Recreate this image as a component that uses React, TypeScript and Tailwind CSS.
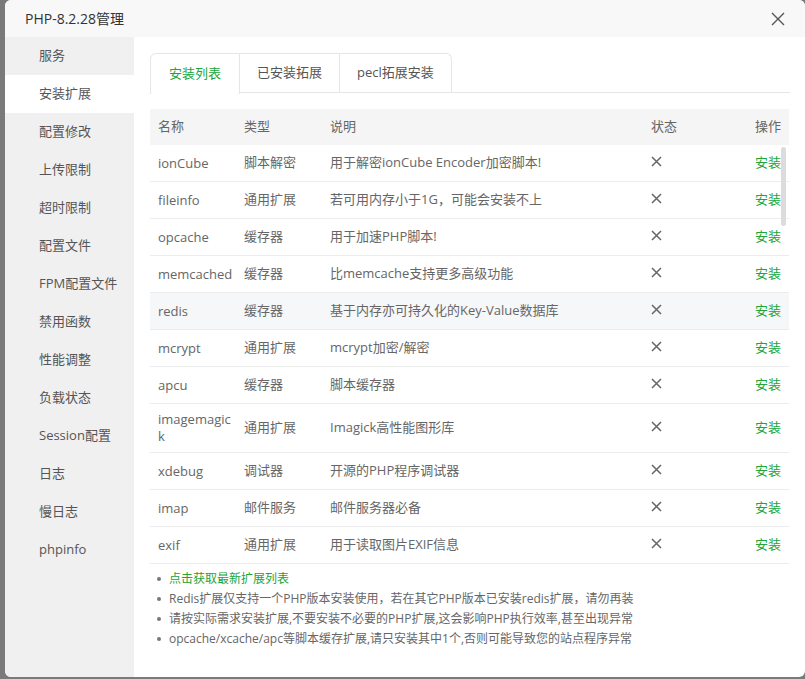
import React from 'react';

const menu = [
  '服务',
  '安装扩展',
  '配置修改',
  '上传限制',
  '超时限制',
  '配置文件',
  'FPM配置文件',
  '禁用函数',
  '性能调整',
  '负载状态',
  'Session配置',
  '日志',
  '慢日志',
  'phpinfo',
];

const rows = [
  { name: 'ionCube', type: '脚本解密', desc: '用于解密ionCube Encoder加密脚本!' },
  { name: 'fileinfo', type: '通用扩展', desc: '若可用内存小于1G，可能会安装不上' },
  { name: 'opcache', type: '缓存器', desc: '用于加速PHP脚本!' },
  { name: 'memcached', type: '缓存器', desc: '比memcache支持更多高级功能' },
  { name: 'redis', type: '缓存器', desc: '基于内存亦可持久化的Key-Value数据库', hover: true },
  { name: 'mcrypt', type: '通用扩展', desc: 'mcrypt加密/解密' },
  { name: 'apcu', type: '缓存器', desc: '脚本缓存器' },
  { name: 'imagemagick', type: '通用扩展', desc: 'Imagick高性能图形库', tall: true },
  { name: 'xdebug', type: '调试器', desc: '开源的PHP程序调试器' },
  { name: 'imap', type: '邮件服务', desc: '邮件服务器必备' },
  { name: 'exif', type: '通用扩展', desc: '用于读取图片EXIF信息' },
];

const notes = [
  'Redis扩展仅支持一个PHP版本安装使用，若在其它PHP版本已安装redis扩展，请勿再装',
  '请按实际需求安装扩展,不要安装不必要的PHP扩展,这会影响PHP执行效率,甚至出现异常',
  'opcache/xcache/apc等脚本缓存扩展,请只安装其中1个,否则可能导致您的站点程序异常',
];

const cols = 'grid grid-cols-[86px_86px_321px_77px_69px]';

export default function App() {
  return (
    <div
      className="w-[805px] h-[679px] bg-[#7a7a7a] pl-[5px] overflow-hidden"
      style={{ fontFamily: '"Open Sans", "Noto Sans CJK SC", sans-serif' }}
    >
      <div className="w-[800px] h-[677px] bg-white rounded-[6px] overflow-hidden flex flex-col">
        {/* title bar */}
        <div className="h-[37px] shrink-0 bg-[#f8f8f8] flex items-center justify-between pl-[20px] pr-[20px]">
          <span className="text-[14px] text-[#333]">PHP-8.2.28管理</span>
          <svg width="14" height="14" viewBox="0 0 14 14" className="mt-[1px]">
            <path d="M1 1L13 13M13 1L1 13" stroke="#555" strokeWidth="1.4" />
          </svg>
        </div>

        <div className="flex flex-1 min-h-0">
          {/* sidebar */}
          <div className="w-[129px] shrink-0 bg-[#f0f0f0]">
            {menu.map((m, i) => (
              <div
                key={m}
                className={`h-[38px] flex items-center pl-[34px] text-[13px] text-[#555] ${
                  i === 1 ? 'bg-white' : ''
                }`}
              >
                {m}
              </div>
            ))}
          </div>

          {/* content */}
          <div className="flex-1 pt-[16px] pl-[16px] pr-[16px]">
            {/* tabs */}
            <div className="flex h-[40px] border-b border-[#e6e6e6] w-[640px]">
              <div className="w-[90px] h-[41px] flex items-center justify-center text-[13px] text-[#20a53a] bg-white border border-b-0 border-[#e6e6e6] rounded-tl-[6px]">
                安装列表
              </div>
              <div className="w-[100px] flex items-center justify-center text-[13px] text-[#555] border-t border-r border-[#e6e6e6]">
                已安装拓展
              </div>
              <div className="w-[112px] flex items-center justify-center text-[13px] text-[#555] border-t border-r border-[#e6e6e6] rounded-tr-[6px]">
                pecl拓展安装
              </div>
            </div>

            {/* table */}
            <div className="relative mt-[16px] w-[639px]">
              <div className={`${cols} h-[36px] items-center bg-[#f5f5f5] text-[13px] text-[#666]`}>
                <div className="pl-[8px]">名称</div>
                <div className="pl-[8px]">类型</div>
                <div className="pl-[8px]">说明</div>
                <div className="pl-[8px]">状态</div>
                <div className="pr-[8px] text-right">操作</div>
              </div>
              {rows.map((r) => (
                <div
                  key={r.name}
                  className={`${cols} ${r.tall ? 'h-[49px]' : 'h-[37px]'} items-center border-b border-[#ececec] text-[13px] text-[#666] ${
                    r.hover ? 'bg-[#f6f7f9]' : ''
                  }`}
                >
                  <div className="pl-[8px] break-all leading-[17px]">{r.name}</div>
                  <div className="pl-[8px]">{r.type}</div>
                  <div className="pl-[8px]">{r.desc}</div>
                  <div className="pl-[8px] pb-[3px]">
                    <svg width="11" height="11" viewBox="0 0 11 11">
                      <path d="M1 1L10 10M10 1L1 10" stroke="#666" strokeWidth="1.5" />
                    </svg>
                  </div>
                  <div className="pr-[8px] text-right text-[#20a53a]">安装</div>
                </div>
              ))}
              <div className="absolute left-[631px] top-[38px] w-[5px] h-[79px] rounded-full bg-[#dcdcdc]" />
            </div>

            {/* notes */}
            <ul className="mt-[5px] text-[12px] leading-[20px] text-[#666]">
              <li className="flex items-center">
                <span className="w-[4px] h-[4px] rounded-full bg-[#777] ml-[7px] mr-[8px]" />
                <span className="text-[#20a53a]">点击获取最新扩展列表</span>
              </li>
              {notes.map((n) => (
                <li key={n} className="flex items-center">
                  <span className="w-[4px] h-[4px] rounded-full bg-[#777] ml-[7px] mr-[8px]" />
                  <span>{n}</span>
                </li>
              ))}
            </ul>
          </div>
        </div>
      </div>
    </div>
  );
}
